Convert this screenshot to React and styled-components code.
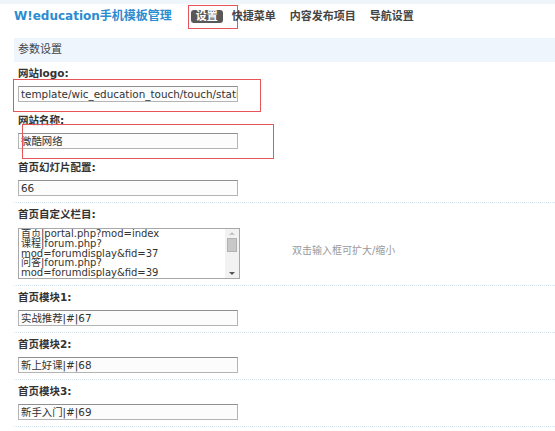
import React from "react";
import styled, { createGlobalStyle } from "styled-components";

const GlobalStyle = createGlobalStyle`
  html, body {
    margin: 0;
    padding: 0;
    background: #fff;
    font-family: "DejaVu Sans", "Noto Sans CJK SC", sans-serif;
    color: #333;
  }
`;

const Page = styled.div`
  width: 555px;
  overflow: hidden;
`;

/* top bar: title + tab menu */
const Header = styled.header`
  box-sizing: border-box;
  height: 38px;
  border-top: 4px solid #eef5fb;
  padding: 4px 0 0 14px;
  display: flex;
  align-items: flex-start;
`;

const HeaderRow = styled.div`
  display: flex;
  align-items: center;
  height: 16px;
`;

const Title = styled.h1`
  margin: 0;
  font-size: 12px;
  line-height: 16px;
  height: 16px;
  font-weight: bold;
  color: #2b8ccf;
  white-space: nowrap;
`;

const Nav = styled.nav`
  display: flex;
  gap: 4px;
  margin-left: 19px;
`;

const NavItem = styled.a`
  position: relative;
  display: block;
  padding: 0 5px;
  height: 13px;
  line-height: 13px;
  font-size: 11px;
  font-weight: bold;
  border-radius: 3px;
  white-space: nowrap;
  color: ${(p) => (p.$active ? "#fff" : "#444")};
  background: ${(p) => (p.$active ? "#585858" : "transparent")};
`;

/* red annotation frames drawn over the form */
const Mark = styled.span`
  position: absolute;
  box-sizing: border-box;
  border: 1px solid #e5555a;
  pointer-events: none;
  left: ${(p) => p.$left}px;
  top: ${(p) => p.$top}px;
  width: ${(p) => p.$w}px;
  height: ${(p) => p.$h}px;
`;

const SectionBar = styled.div`
  margin-left: 14px;
  height: 24px;
  line-height: 24px;
  padding-left: 4px;
  background: #eef5fc;
  font-size: 11px;
  color: #444;
`;

const Form = styled.div`
  padding-left: 14px;
`;

const Row = styled.div`
  position: relative;
  padding: 4px 0 6px 4px;
  border-bottom: 1px dotted ${(p) => (p.$plain ? "transparent" : "#d6e4f0")};
`;

const Label = styled.div`
  height: 14px;
  font-size: 10.5px;
  line-height: 14px;
  font-weight: bold;
  color: #333;
  margin-bottom: 6px;
  overflow: hidden;
`;

const Field = styled.div`
  position: relative;
  display: flex;
  align-items: flex-start;
`;

/* single-line text box (read-only value) */
const TextInput = styled.div`
  box-sizing: border-box;
  width: 220px;
  height: 16px;
  padding: 0 2px;
  border: 1px solid #b4b4b4;
  border-top-color: #8f8f8f;
  background: #fcfcfc;
  font-size: 10.4px;
  line-height: 14px;
  color: #333;
  white-space: nowrap;
  overflow: hidden;
`;

const TextBox = styled.div`
  box-sizing: border-box;
  width: 222px;
  height: 51px;
  margin-top: 1px;
  border: 1px solid #a8a8a8;
  display: flex;
  background: #fff;
`;

const TextLines = styled.div`
  flex: 1;
  padding: 0 2px;
  overflow: hidden;
`;

const TextLine = styled.div`
  height: 9.8px;
  font-size: 10px;
  line-height: 9.8px;
  color: #333;
  white-space: nowrap;
`;

const ScrollTrack = styled.div`
  width: 14px;
  background: #f2f2f2;
  display: flex;
  flex-direction: column;
  align-items: center;
  padding: 3px 0;
  box-sizing: border-box;
`;

const Arrow = styled.span`
  width: 0;
  height: 0;
  border-left: 3px solid transparent;
  border-right: 3px solid transparent;
  ${(p) =>
    p.$down
      ? "border-top: 3px solid #555; margin-top: auto;"
      : "border-bottom: 3px solid #c4c4c4;"}
`;

const Thumb = styled.span`
  box-sizing: border-box;
  width: 10px;
  height: 14px;
  margin-top: 3px;
  background: #c8c8c8;
  border: 1px solid #b2b2b2;
`;

const Hint = styled.span`
  display: block;
  height: 14px;
  margin: 17px 0 0 52px;
  font-size: 10px;
  line-height: 14px;
  color: #999;
  white-space: nowrap;
`;

const navItems = ["设置", "快捷菜单", "内容发布项目", "导航设置"];

const menuLines = [
  "首页|portal.php?mod=index",
  "课程|forum.php?",
  "mod=forumdisplay&fid=37",
  "问答|forum.php?",
  "mod=forumdisplay&fid=39",
];

const modules = [
  ["首页模块1:", "实战推荐|#|67"],
  ["首页模块2:", "新上好课|#|68"],
  ["首页模块3:", "新手入门|#|69"],
];

export default function App() {
  return (
    <Page>
      <GlobalStyle />
      <Header>
        <HeaderRow>
          <Title>W!education手机模板管理</Title>
          <Nav>
            {navItems.map((item, i) => (
              <NavItem key={item} $active={i === 0}>
                {item}
                {i === 0 && <Mark $left={-3} $top={-5} $w={50} $h={24} />}
              </NavItem>
            ))}
          </Nav>
        </HeaderRow>
      </Header>

      <SectionBar>参数设置</SectionBar>

      <Form>
        <Row $plain>
          <Label>网站logo:</Label>
          <Field>
            <TextInput>template/wic_education_touch/touch/static/images/logo.png</TextInput>
            <Mark $left={-5} $top={-7} $w={248} $h={33} />
          </Field>
        </Row>
        <Row $plain>
          <Label>网站名称:</Label>
          <Field>
            <TextInput>微酷网络</TextInput>
            <Mark $left={4} $top={-9} $w={252} $h={35} />
          </Field>
        </Row>
        <Row>
          <Label>首页幻灯片配置:</Label>
          <TextInput>66</TextInput>
        </Row>
        <Row>
          <Label>首页自定义栏目:</Label>
          <Field>
            <TextBox>
              <TextLines>
                {menuLines.map((line) => (
                  <TextLine key={line}>{line}</TextLine>
                ))}
              </TextLines>
              <ScrollTrack>
                <Arrow />
                <Thumb />
                <Arrow $down />
              </ScrollTrack>
            </TextBox>
            <Hint>双击输入框可扩大/缩小</Hint>
          </Field>
        </Row>
        {modules.map(([label, value]) => (
          <Row key={label}>
            <Label>{label}</Label>
            <TextInput>{value}</TextInput>
          </Row>
        ))}
      </Form>
    </Page>
  );
}
